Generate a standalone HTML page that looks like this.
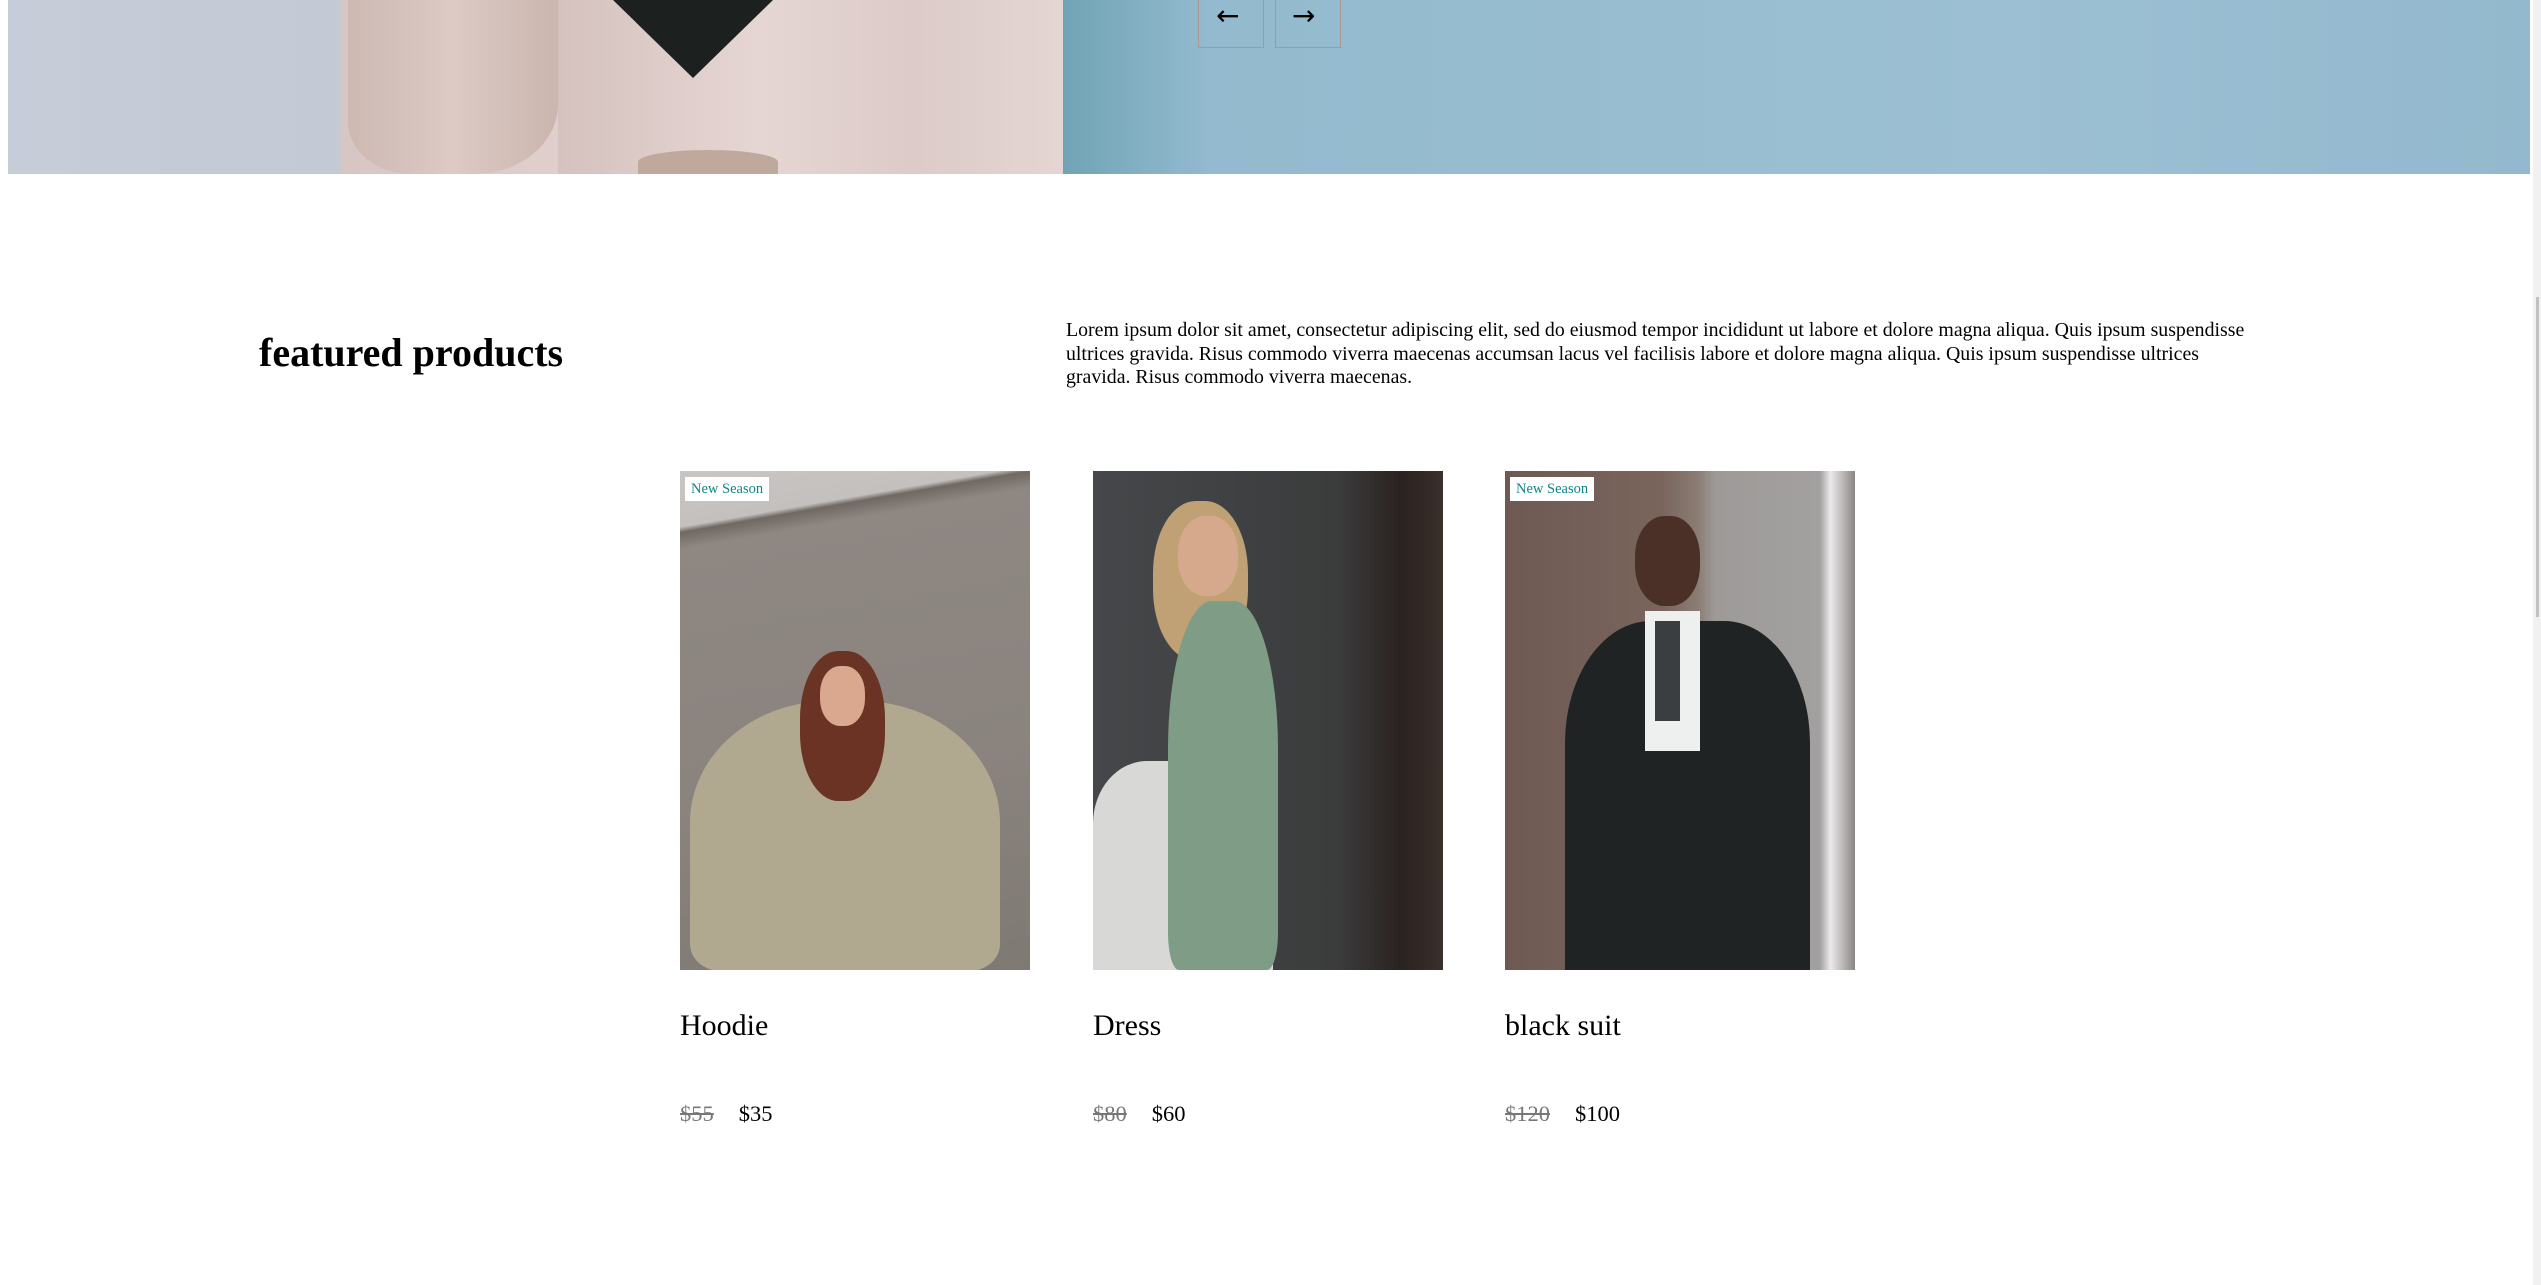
<!DOCTYPE html>
<html><head><meta charset="utf-8"><style>
html,body{margin:0;padding:0;background:#fff;width:2541px;height:1285px;overflow:hidden;font-family:"Liberation Serif",serif;color:#000}
.hero{position:absolute;left:8px;top:0;width:2522px;height:174px;background:linear-gradient(90deg,#c6ccd8 0,#c3cad6 330px,#d8c6c4 335px,#e0cfcc 560px,#d9c6c3 900px,#dcc9c6 1045px,#6fa3b4 1050px,#93bace 1200px,#9cbfd3 2000px,#93b9ce 2522px)}
.scarf{position:absolute;left:605px;top:0;width:0;height:0;border-left:80px solid transparent;border-right:80px solid transparent;border-top:78px solid #1c211f}
.bag{position:absolute;left:340px;top:0;width:210px;height:174px;background:linear-gradient(90deg,#cdb8b2,#ddcac5 50%,#cbb5ae);border-radius:0 0 40% 30%}
.box{position:absolute;top:-2px;width:64px;height:49px;border:1px solid #a89890;border-top:none}
.arr{position:absolute;top:2px;font-size:28px;font-family:"DejaVu Sans",sans-serif;line-height:28px}
.sb{position:absolute;left:2533px;top:0;width:8px;height:1285px;background:#f1f1f1}
.thumb{position:absolute;left:2536px;top:297px;width:3px;height:320px;background:#c1c1c1}
h2{position:absolute;left:259px;top:331px;margin:0;font-size:40px;font-weight:bold;line-height:44px}
p{position:absolute;left:1066px;top:319px;margin:0;font-size:19.85px;line-height:23.5px;white-space:nowrap}
.card{position:absolute;top:471px;width:350px}
.img{width:350px;height:499px;position:relative;overflow:hidden}
.badge{position:absolute;left:5px;top:6px;background:#fff;color:#10858a;font-size:14.5px;padding:2px 6px;line-height:20px}
.t{position:absolute;top:537px;font-size:30px;line-height:36px;white-space:nowrap}
.pr{position:absolute;top:630px;font-size:22.5px;line-height:26px;white-space:nowrap}
.pr s{color:#777;margin-right:25px}
</style></head><body>
<div class="hero">
 <div class="bag"></div>
 <div style="position:absolute;left:550px;top:0;width:505px;height:174px;background:linear-gradient(90deg,#d5c2bf,#e6d6d3 40%,#dccbc8 70%,#e4d5d3)"></div>
 <div class="scarf"></div>
 <div style="position:absolute;left:630px;top:150px;width:140px;height:24px;background:#bfa89c;border-radius:50% 50% 0 0"></div>
</div>
<div class="box" style="left:1198px"></div>
<div class="box" style="left:1275px"></div>
<div class="arr" style="left:1216px">←</div>
<div class="arr" style="left:1292px">→</div>
<div class="sb"></div><div class="thumb"></div>

<h2>featured products</h2>
<p>Lorem ipsum dolor sit amet, consectetur adipiscing elit, sed do eiusmod tempor incididunt ut labore et dolore magna aliqua. Quis ipsum suspendisse<br>ultrices gravida. Risus commodo viverra maecenas accumsan lacus vel facilisis labore et dolore magna aliqua. Quis ipsum suspendisse ultrices<br>gravida. Risus commodo viverra maecenas.</p>

<div class="card" style="left:680px">
 <div class="img" style="background:linear-gradient(170deg,#c9c5c3 0,#c4c0be 10%,#6f6863 11%,#8e8782 14%,#8a837e 60%,#7f7974 100%)">
  <div style="position:absolute;left:10px;top:230px;width:310px;height:270px;background:#b0a88f;border-radius:45% 45% 10% 10%"></div>
  <div style="position:absolute;left:120px;top:180px;width:85px;height:150px;background:#6a3324;border-radius:45%"></div>
  <div style="position:absolute;left:140px;top:195px;width:45px;height:60px;background:#d9a88e;border-radius:45%"></div>
  <div class="badge">New Season</div>
 </div>
 <div class="t">Hoodie</div>
 <div class="pr"><s>$55</s>$35</div>
</div>
<div class="card" style="left:1093px">
 <div class="img" style="background:linear-gradient(90deg,#45474a,#3b3c3c 70%,#2a2220 88%,#3a302c)">
  <div style="position:absolute;left:0;top:290px;width:180px;height:209px;background:#d8d9d6;border-radius:30% 0 0 0"></div>
  <div style="position:absolute;left:60px;top:30px;width:95px;height:160px;background:#c0a175;border-radius:45%"></div>
  <div style="position:absolute;left:75px;top:130px;width:110px;height:369px;background:#7f9c86;border-radius:40% 40% 10% 10%"></div>
  <div style="position:absolute;left:85px;top:45px;width:60px;height:80px;background:#d6a88c;border-radius:45%"></div>
 </div>
 <div class="t">Dress</div>
 <div class="pr"><s>$80</s>$60</div>
</div>
<div class="card" style="left:1505px">
 <div class="img" style="background:linear-gradient(90deg,#6e5a53,#7a655d 45%,#8a7c74 55%,#9d9a98 60%,#a3a1a0 90%,#eceaea 93%,#8a8684)">
  <div style="position:absolute;left:60px;top:150px;width:245px;height:349px;background:#1f2324;border-radius:35% 35% 0 0"></div>
  <div style="position:absolute;left:140px;top:140px;width:55px;height:140px;background:#eef0f0"></div>
  <div style="position:absolute;left:150px;top:150px;width:25px;height:100px;background:#3a3e40"></div>
  <div style="position:absolute;left:130px;top:45px;width:65px;height:90px;background:#4b3027;border-radius:45%"></div>
  <div class="badge">New Season</div>
 </div>
 <div class="t">black suit</div>
 <div class="pr"><s>$120</s>$100</div>
</div>
</body></html>
